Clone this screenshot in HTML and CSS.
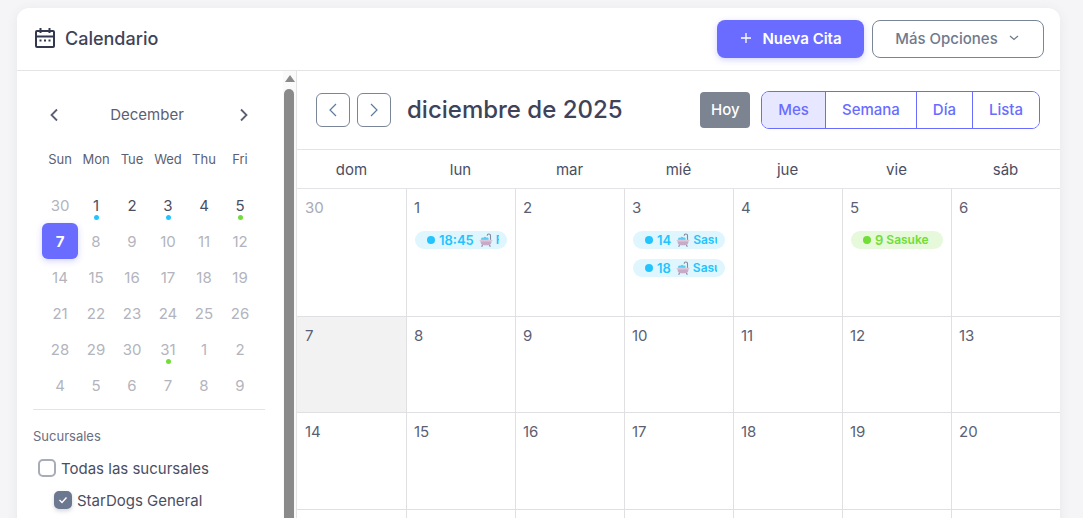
FILE: index.html
```html
<!DOCTYPE html>
<html lang="es">
<head>
    <meta charset="UTF-8">
    <meta name="viewport" content="width=device-width, initial-scale=1.0">
    <title>Calendario</title>
    <link rel="stylesheet" href="styles.css">
</head>
<body>
    <div class="card">
        <header class="card-header">
            <h1 class="page-title">
                <svg class="title-icon" width="20" height="20" viewBox="0 0 20 20" fill="none" stroke="currentColor" stroke-width="2">
                    <rect x="1" y="3" width="18" height="16" rx="1"/>
                    <path d="M1 8.500h18M5.500 0v5M14.500 0v5"/>
                    <path d="M4.500 12.500h2M9 12.500h2M13.500 12.500h2" stroke-width="1.800"/>
                </svg>
                Calendario
            </h1>
            <div class="header-actions">
                <button class="btn-new">
                    <svg width="12" height="12" viewBox="0 0 12 12" fill="none" stroke="currentColor" stroke-width="1.300"><path d="M6 1v10M1 6h10"/></svg>
                    Nueva Cita
                </button>
                <button class="btn-more">
                    Más Opciones
                    <svg width="10" height="6" viewBox="0 0 10 6" fill="none" stroke="currentColor" stroke-width="1.300"><path d="M1 1l4 3.500L9 1"/></svg>
                </button>
            </div>
        </header>

        <div class="card-body">
            <aside class="sidebar">
                <div class="sidebar-content">
                    <div class="mini-head">
                        <svg width="10" height="14" viewBox="0 0 10 14" fill="none" stroke="currentColor" stroke-width="1.800"><path d="M8 1.500L2.500 7 8 12.500"/></svg>
                        <span>December</span>
                        <svg width="10" height="14" viewBox="0 0 10 14" fill="none" stroke="currentColor" stroke-width="1.800"><path d="M2 1.500L7.500 7 2 12.500"/></svg>
                    </div>
                    <div class="mini-grid">
                        <span class="mini-dow">Sun</span><span class="mini-dow">Mon</span><span class="mini-dow">Tue</span><span class="mini-dow">Wed</span><span class="mini-dow">Thu</span><span class="mini-dow">Fri</span>

                        <span class="mini-day muted">30</span>
                        <span class="mini-day">1<i class="mini-dot info"></i></span>
                        <span class="mini-day">2</span>
                        <span class="mini-day">3<i class="mini-dot info"></i></span>
                        <span class="mini-day">4</span>
                        <span class="mini-day">5<i class="mini-dot success"></i></span>

                        <span class="mini-day selected">7</span>
                        <span class="mini-day muted">8</span>
                        <span class="mini-day muted">9</span>
                        <span class="mini-day muted">10</span>
                        <span class="mini-day muted">11</span>
                        <span class="mini-day muted">12</span>

                        <span class="mini-day muted">14</span>
                        <span class="mini-day muted">15</span>
                        <span class="mini-day muted">16</span>
                        <span class="mini-day muted">17</span>
                        <span class="mini-day muted">18</span>
                        <span class="mini-day muted">19</span>

                        <span class="mini-day muted">21</span>
                        <span class="mini-day muted">22</span>
                        <span class="mini-day muted">23</span>
                        <span class="mini-day muted">24</span>
                        <span class="mini-day muted">25</span>
                        <span class="mini-day muted">26</span>

                        <span class="mini-day muted">28</span>
                        <span class="mini-day muted">29</span>
                        <span class="mini-day muted">30</span>
                        <span class="mini-day muted">31<i class="mini-dot success"></i></span>
                        <span class="mini-day muted">1</span>
                        <span class="mini-day muted">2</span>

                        <span class="mini-day muted">4</span>
                        <span class="mini-day muted">5</span>
                        <span class="mini-day muted">6</span>
                        <span class="mini-day muted">7</span>
                        <span class="mini-day muted">8</span>
                        <span class="mini-day muted">9</span>
                    </div>
                    <hr class="divider">
                    <div class="filter-title">Sucursales</div>
                    <label class="check-row">
                        <span class="check-box"></span>
                        Todas las sucursales
                    </label>
                    <label class="check-row nested">
                        <span class="check-box checked">
                            <svg width="10" height="8" viewBox="0 0 10 8" fill="none" stroke="#fff" stroke-width="1.400"><path d="M1.500 4l2.500 2.500 4.500-5"/></svg>
                        </span>
                        StarDogs General
                    </label>
                </div>
                <div class="scrollbar">
                    <div class="scroll-arrow"></div>
                    <div class="scroll-thumb"></div>
                </div>
            </aside>

            <main class="calendar">
                <div class="toolbar">
                    <button class="nav-btn">
                        <svg width="8" height="14" viewBox="0 0 8 14" fill="none" stroke="#5a7aa0" stroke-width="1.200"><path d="M7 1L1 7l6 6"/></svg>
                    </button>
                    <button class="nav-btn">
                        <svg width="8" height="14" viewBox="0 0 8 14" fill="none" stroke="#5a7aa0" stroke-width="1.200"><path d="M1 1l6 6-6 6"/></svg>
                    </button>
                    <h2 class="month-title">diciembre de 2025</h2>
                    <button class="btn-today">Hoy</button>
                    <div class="view-group">
                        <button class="view-btn active">Mes</button>
                        <button class="view-btn">Semana</button>
                        <button class="view-btn">Día</button>
                        <button class="view-btn">Lista</button>
                    </div>
                </div>

                <div class="week-head">
                    <div>dom</div><div>lun</div><div>mar</div><div>mié</div><div>jue</div><div>vie</div><div>sáb</div>
                </div>

                <div class="week first">
                    <div class="day other">30</div>
                    <div class="day">1
                        <div class="event info">
                            <div class="event-inner">
                                <i class="event-dot"></i><b class="event-time">18:45</b>
                                <svg class="bath" viewBox="0 0 14 14"><use href="#bath"/></svg>
                                <span class="event-name">Firulais</span>
                            </div>
                        </div>
                    </div>
                    <div class="day">2</div>
                    <div class="day">3
                        <div class="event info">
                            <div class="event-inner">
                                <i class="event-dot"></i><b class="event-time">14</b>
                                <svg class="bath" viewBox="0 0 14 14"><use href="#bath"/></svg>
                                <span class="event-name">Sasuke</span>
                            </div>
                        </div>
                        <div class="event info">
                            <div class="event-inner">
                                <i class="event-dot"></i><b class="event-time">18</b>
                                <svg class="bath" viewBox="0 0 14 14"><use href="#bath"/></svg>
                                <span class="event-name">Sasuke</span>
                            </div>
                        </div>
                    </div>
                    <div class="day">4</div>
                    <div class="day">5
                        <div class="event success">
                            <div class="event-inner">
                                <i class="event-dot"></i><b class="event-time">9</b>
                                <span class="event-name">Sasuke</span>
                            </div>
                        </div>
                    </div>
                    <div class="day">6</div>
                </div>
                <div class="week">
                    <div class="day today">7</div>
                    <div class="day">8</div><div class="day">9</div><div class="day">10</div><div class="day">11</div><div class="day">12</div><div class="day">13</div>
                </div>
                <div class="week">
                    <div class="day">14</div><div class="day">15</div><div class="day">16</div><div class="day">17</div><div class="day">18</div><div class="day">19</div><div class="day">20</div>
                </div>
                <div class="week">
                    <div class="day">21</div><div class="day">22</div><div class="day">23</div><div class="day">24</div><div class="day">25</div><div class="day">26</div><div class="day">27</div>
                </div>
            </main>
        </div>
    </div>

    <svg width="0" height="0" class="defs">
        <symbol id="bath" viewBox="0 0 14 14">
            <path d="M11.500 7V2.800C11.500 1.600 10.800 1 9.800 1S8.200 1.600 8.200 2.800" fill="none" stroke="#85889a" stroke-width="1.100"/>
            <circle cx="3.500" cy="6" r="1.500" fill="#5fcbf0"/>
            <circle cx="6" cy="5.500" r="1.800" fill="#5fcbf0"/>
            <circle cx="8.300" cy="6" r="1.400" fill="#5fcbf0"/>
            <rect x="0.500" y="6.800" width="13" height="1.500" rx="0.700" fill="#d8c8da"/>
            <path d="M1.500 8.300h11c0 2.700-1.200 3.900-3.300 3.900H4.800c-2.100 0-3.300-1.200-3.300-3.900z" fill="#c8aac8"/>
            <path d="M3.500 12l-.8 1.800M10.500 12l.8 1.800" stroke="#85889a" stroke-width="1.100"/>
        </symbol>
    </svg>
</body>
</html>
```

FILE: styles.css
```css
* {
    box-sizing: border-box;
}
html, body {
    height: 100%;
    overflow: hidden;
}
body {
    font-family: Inter, "Noto Sans", sans-serif;
    background-color: #f5f5f7;
    color: #3e4358;
    margin: 0;
    padding: 8px 23px 0 17px;
}
button {
    font-family: inherit;
    cursor: pointer;
}
.defs {
    position: absolute;
}
.card {
    background-color: #fff;
    border-radius: 12px 12px 0 0;
    box-shadow: 0 2px 12px rgba(67, 72, 90, 0.08);
}
.card-header {
    height: 63px;
    padding: 0 16px 0 18px;
    display: flex;
    align-items: center;
    justify-content: space-between;
    border-bottom: 1px solid #e4e4e7;
}
.page-title {
    display: flex;
    align-items: center;
    gap: 10px;
    margin: 0 0 2px;
    font-size: 18px;
    font-weight: 500;
    color: #3e4358;
}
.title-icon {
    color: #33384f;
    margin-top: -1px;
}
.header-actions {
    display: flex;
    gap: 8px;
}
.btn-new {
    width: 147px;
    height: 38px;
    padding: 0 0 2px 1px;
    display: flex;
    align-items: center;
    justify-content: center;
    gap: 10px;
    background-color: #696cff;
    color: #fff;
    border: none;
    border-radius: 8px;
    font-size: 15px;
    font-weight: 600;
    box-shadow: 0 2px 6px rgba(105, 108, 255, 0.3);
}
.btn-more {
    width: 172px;
    height: 38px;
    padding: 0 2px 2px 0;
    display: flex;
    align-items: center;
    justify-content: center;
    gap: 11px;
    background-color: #fff;
    color: #6f7a8c;
    border: 1px solid #7a8598;
    border-radius: 8px;
    font-size: 15px;
    font-weight: 500;
}
.card-body {
    display: flex;
    height: 520px;
}
.sidebar {
    width: 280px;
    flex: none;
    display: flex;
    border-right: 1px solid #e4e4e7;
    overflow: hidden;
}
.sidebar-content {
    width: 266px;
    flex: none;
    padding: 0 0 0 16px;
}
.mini-head {
    width: 232px;
    height: 24px;
    margin-top: 32px;
    padding: 0 16px 0 16px;
    display: flex;
    align-items: center;
    justify-content: space-between;
    font-size: 15px;
    color: #5b5f74;
}
.mini-head span {
    margin: 0 4px 2px 0;
}
.mini-grid {
    display: grid;
    grid-template-columns: repeat(6, 36px);
    grid-auto-rows: 36px;
    margin: 24px 0 0 9px;
}
.mini-dow {
    font-size: 13px;
    text-align: center;
    line-height: 16px;
    color: #5b5f74;
}
.mini-day {
    position: relative;
    display: flex;
    align-items: center;
    justify-content: center;
    font-size: 15px;
    color: #4a4e63;
}
.mini-day.muted {
    color: #b3b4bd;
}
.mini-day.selected {
    background-color: #696cff;
    color: #fff;
    font-weight: 700;
    border-radius: 6px;
    box-shadow: 0 2px 6px rgba(105, 108, 255, 0.3);
}
.mini-dot {
    position: absolute;
    left: 16px;
    bottom: 3px;
    width: 5px;
    height: 5px;
    border-radius: 50%;
}
.mini-dot.info {
    background-color: #22c4ff;
}
.mini-dot.success {
    background-color: #71dd37;
}
.divider {
    width: 232px;
    margin: 6px 0 0;
    border: none;
    border-top: 1px solid #e4e4e7;
}
.filter-title {
    margin-top: 18px;
    font-size: 13px;
    color: #6a6e82;
}
.check-row {
    display: flex;
    align-items: center;
    gap: 5px;
    height: 32px;
    margin-top: 8px;
    margin-left: 5px;
    font-size: 15px;
    color: #4a4e63;
}
.check-row.nested {
    margin-top: 0;
    margin-left: 21px;
}
.check-box {
    width: 18px;
    height: 18px;
    border: 2px solid #a8abb8;
    border-radius: 5px;
    display: flex;
    align-items: center;
    justify-content: center;
}
.check-box.checked {
    background-color: #6c7790;
    border-color: #6c7790;
    box-shadow: 0 2px 4px rgba(108, 119, 144, 0.3);
}
.scrollbar {
    width: 13px;
    flex: none;
    background-color: #fafafa;
    padding: 4px 1px 0;
}
.scroll-arrow {
    width: 0;
    height: 0;
    margin: 0 auto;
    border-left: 5px solid transparent;
    border-right: 5px solid transparent;
    border-bottom: 7px solid #8a8a8a;
}
.scroll-thumb {
    height: 500px;
    margin: 7px 0 0;
    width: 10px;
    background-color: #8a8a8a;
    border-radius: 5px 5px 0 0;
}
.calendar {
    flex: 1;
    min-width: 0;
}
.toolbar {
    height: 79px;
    padding: 0 20px 0 19px;
    display: flex;
    align-items: center;
    border-bottom: 1px solid #e4e4e7;
}
.nav-btn {
    width: 34px;
    height: 34px;
    margin-right: 7px;
    padding: 0;
    display: flex;
    align-items: center;
    justify-content: center;
    background-color: #fff;
    border: 1px solid #7a8598;
    border-radius: 6px;
}
.month-title {
    flex: 1;
    margin: 0 0 2px 9px;
    font-size: 24px;
    font-weight: 500;
    color: #3e4358;
}
.btn-today {
    width: 50px;
    height: 36px;
    margin-right: 11px;
    padding: 0 0 2px;
    background-color: #7b8490;
    color: #fff;
    border: none;
    border-radius: 4px;
    font-size: 15px;
    font-weight: 500;
}
.view-group {
    display: flex;
    height: 38px;
    border: 1px solid #696cff;
    border-radius: 8px;
    overflow: hidden;
}
.view-btn {
    height: 100%;
    padding: 0 16px 2px;
    background-color: #fff;
    color: #696cff;
    border: none;
    border-left: 1px solid #696cff;
    font-size: 15px;
    font-weight: 500;
}
.view-btn:first-child {
    border-left: none;
}
.view-btn.active {
    background-color: #e7e7ff;
}
.week-head {
    display: grid;
    grid-template-columns: repeat(7, 109px);
    height: 39px;
    align-items: center;
    text-align: center;
    font-size: 15px;
    color: #4a4e63;
    border-bottom: 1px solid #e4e4e7;
}
.week {
    display: grid;
    grid-template-columns: 110px repeat(5, 109px) 108px;
    height: 96.400px;
    border-bottom: 1px solid #e0e0e3;
}
.week.first {
    height: 128px;
}
.day {
    padding: 10px 8px 0 7px;
    font-size: 15px;
    line-height: 18px;
    color: #5b5f74;
    border-right: 1px solid #e0e0e3;
}
.day:first-child {
    padding-left: 8px;
}
.day:last-child {
    border-right: none;
}
.day.other {
    color: #a9aab4;
}
.day.today {
    background-color: #f2f2f3;
}
.event {
    height: 18px;
    width: 92px;
    margin: 14px 0 0 1px;
    padding: 0 8px 0 12px;
    border-radius: 9px;
}
.event + .event {
    margin-top: 10px;
}
.event-inner {
    display: flex;
    align-items: center;
    height: 100%;
    overflow: hidden;
    white-space: nowrap;
    font-size: 12px;
    font-weight: 600;
}
.event.info {
    background-color: #dff6fe;
    color: #22c4ff;
}
.event.success {
    background-color: #e6f9da;
    color: #71dd37;
}
.event-dot {
    flex: none;
    width: 8px;
    height: 8px;
    border-radius: 50%;
    margin-right: 4px;
    background-color: currentColor;
}
.event-time {
    font-size: 13px;
    font-weight: 600;
}
.bath {
    flex: none;
    width: 14px;
    height: 14px;
    margin: 0 3px 0 5px;
}
.event.success .event-name {
    margin-left: 3px;
}
```
